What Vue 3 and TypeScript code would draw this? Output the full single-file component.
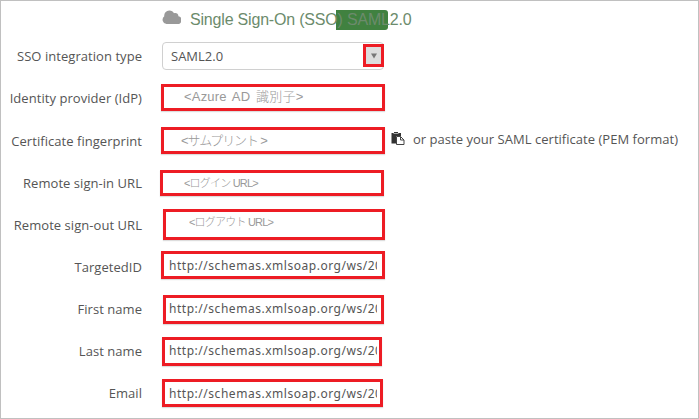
<script setup lang="ts">
interface Field {
  key: string
  label: string
  kind: 'hint' | 'url'
  value: string
}

const schemaUrl = 'http://schemas.xmlsoap.org/ws/20'

const fields: Field[] = [
  { key: 'idp', label: 'Identity provider (IdP)', kind: 'hint', value: '<Azure AD 識別子>' },
  { key: 'cert', label: 'Certificate fingerprint', kind: 'hint', value: '<サムプリント >' },
  { key: 'signin', label: 'Remote sign-in URL', kind: 'hint', value: '<ログイン URL>' },
  { key: 'signout', label: 'Remote sign-out URL', kind: 'hint', value: '<ログアウト URL>' },
  { key: 'target', label: 'TargetedID', kind: 'url', value: schemaUrl },
  { key: 'first', label: 'First name', kind: 'url', value: schemaUrl },
  { key: 'last', label: 'Last name', kind: 'url', value: schemaUrl },
  { key: 'email', label: 'Email', kind: 'url', value: schemaUrl },
]
</script>

<template>
  <main class="panel">
    <header class="heading">
      <svg class="cloud" viewBox="0 0 19 14" width="19" height="14">
        <path
          d="M4.500 14A4.300 4.300 0 0 1 2.300 6.300 5 5 0 0 1 7.300 0.500c2.300 0 4 1.100 4.700 2.800 2.200-.9 4.600.7 4.400 3A3.900 3.900 0 0 1 14.800 14z"
          fill="#999"
        />
      </svg>
      <h1 class="title"><span class="badge"></span><span class="words">Single Sign-On (SSO) SAML2.0</span></h1>
    </header>

    <div class="row type">
      <label class="label">SSO integration type</label>
      <div class="select">
        <span class="choice">SAML2.0</span>
        <span class="arrow">
          <svg viewBox="0 0 6 6" width="6" height="6"><path d="M0 .5h6L3 5.500z" fill="#777" /></svg>
        </span>
      </div>
    </div>

    <div v-for="f in fields" :key="f.key" class="row" :class="f.key">
      <label class="label">{{ f.label }}</label>
      <div class="box"><span class="clip"><span :class="f.kind">{{ f.value }}</span></span></div>
      <div v-if="f.key === 'cert'" class="paste">
        <svg viewBox="0 0 14 14" width="14" height="14">
          <path d="M0.500 1h2.500V0h4v1h3v3H5v7.500H0.500z" fill="#333" />
          <path d="M2.500 1.500h5" stroke="#aaa" />
          <path d="M5.500 4.500h4l3.500 3.500v4.500H5.500z" fill="#fff" stroke="#444" />
          <path d="M9.500 4.500V8H13" fill="none" stroke="#444" />
        </svg>
        <span class="pastetext">or paste your SAML certificate (PEM format)</span>
      </div>
    </div>
  </main>
</template>

<style>
body {
  background: #fff;
}
</style>

<style scoped>
.panel {
  box-sizing: border-box;
  width: 699px;
  height: 419px;
  border: 1px solid #c0c0c0;
  background: #fff;
  overflow: hidden;
  font-family: 'Open Sans', 'Noto Sans', sans-serif;
  font-size: 13px;
  color: #555;
}
.heading {
  display: flex;
  height: 35px;
  padding-left: 161px;
}
.cloud {
  margin-top: 9px;
}
.title {
  position: relative;
  margin: 9px 0 0 9px;
  font: 400 16px/20px 'Liberation Sans', Arial, sans-serif;
  letter-spacing: -0.19px;
  color: #6c8b6c;
  white-space: nowrap;
}
.badge {
  position: absolute;
  left: 146px;
  top: 0;
  width: 52px;
  height: 20px;
  border-radius: 0 3px 3px 0;
  background: #408140;
}
.words {
  position: relative;
}
.row {
  display: flex;
  height: 42px;
}
.label {
  width: 141px;
  margin-right: 18px;
  line-height: 42px;
  letter-spacing: 0.05px;
  text-align: right;
  white-space: nowrap;
}
.type .label,
.idp .label {
  line-height: 41px;
}
.select {
  box-sizing: border-box;
  display: flex;
  justify-content: space-between;
  width: 222px;
  height: 28px;
  margin: 6px 0 0 2px;
  border: 1px solid #d0d0d0;
  border-radius: 4px;
}
.choice {
  padding-left: 8px;
  line-height: 27px;
}
.arrow {
  box-sizing: border-box;
  display: flex;
  align-items: center;
  justify-content: center;
  width: 21px;
  height: 23px;
  margin: 1px -1px 0 0;
  border: 3px solid #ed1c24;
  background: #ddd;
}
.box {
  box-sizing: border-box;
  flex: none;
  border: 3px solid #ed1c24;
  box-shadow: 0 1px 1px #ddd;
}
.clip {
  display: block;
  height: 22px;
  overflow: hidden;
  white-space: nowrap;
}
.hint {
  color: #999;
  font-family: 'Liberation Sans', 'Noto Sans CJK JP', sans-serif;
  font-weight: 300;
  line-height: 20px;
}
.url {
  font-family: 'Noto Sans', sans-serif;
  font-size: 12px;
  line-height: 23px;
  letter-spacing: 0.53px;
}
.idp .box { width: 224px; height: 27px; margin: 6px 0 0 1px; padding-left: 20px; }
.cert .box { width: 224px; height: 27px; margin: 7px 0 0 1px; padding-left: 17px; }
.signin .box { width: 224px; height: 26px; margin-top: 8px; padding-left: 21px; }
.signout .box { width: 222px; height: 31px; margin: 5px 0 0 3px; padding-left: 23px; }
.target .box { width: 224px; height: 28px; margin: 5px 0 0 1px; padding: 0 5px; }
.first .box { width: 221px; height: 29px; margin: 7px 0 0 3px; padding: 0 4px 0 3px; }
.last .box { width: 220px; height: 29px; margin: 7px 0 0 2px; padding: 0 2px 0 4px; }
.email .box { width: 221px; height: 28px; margin: 7px 0 0 2px; padding: 0 3px 0 4px; }
.idp .hint {
  line-height: 17px;
  word-spacing: 2px;
  letter-spacing: 0.2px;
}
.cert .hint {
  letter-spacing: -1.1px;
  word-spacing: 0;
}
.cert .clip {
  padding-top: 1px;
}
.signin .hint,
.signout .hint {
  font-size: 11px;
  line-height: 19px;
  letter-spacing: -0.8px;
}
.first .url,
.last .url {
  line-height: 22px;
}
.paste {
  display: flex;
  margin-left: 6px;
}
.paste svg {
  margin-top: 12px;
}
.pastetext {
  margin-left: 8px;
  line-height: 38px;
  letter-spacing: 0.03px;
  white-space: nowrap;
}
</style>
